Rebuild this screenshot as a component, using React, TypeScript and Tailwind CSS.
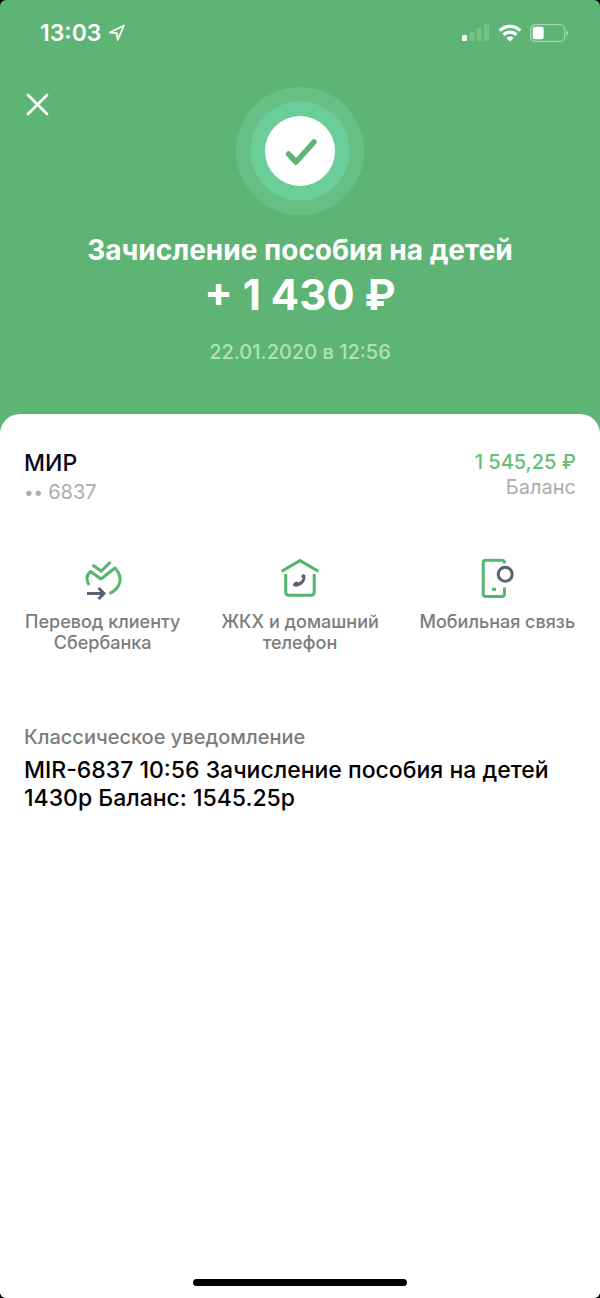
import React from 'react';

interface QuickActionProps {
  label: string;
  children: React.ReactNode;
}

function QuickAction({ label, children }: QuickActionProps) {
  return (
    <button type="button" className="flex flex-1 flex-col items-center gap-[13px] px-4">
      <svg viewBox="0 0 40 40" className="h-10 w-10 overflow-visible" fill="none" strokeWidth="3" aria-hidden="true">
        {children}
      </svg>
      <span className="text-center text-[18px] font-medium leading-[21px] text-[#7c7c7c]">{label}</span>
    </button>
  );
}

function StatusBar() {
  return (
    <div className="flex h-[66px] items-center justify-between pl-10 pr-8">
      <div className="flex items-center gap-[6px]">
        <span className="text-[23px] font-semibold leading-7">13:03</span>
        <svg viewBox="0 0 18 18" className="h-[18px] w-[18px]" fill="none" stroke="currentColor" strokeWidth="1.8" strokeLinejoin="round" aria-hidden="true">
          <path d="M16 1.5 2 8.5l6.8.7.8 6.8Z" />
        </svg>
      </div>
      <div className="flex items-center gap-2">
        <svg viewBox="0 0 28 18" className="h-[18px] w-7" fill="currentColor" aria-hidden="true">
          <rect x="0" y="11" width="5" height="6" rx="1.3" />
          <rect x="7.4" y="8" width="5" height="9" rx="1.3" opacity="0.16" />
          <rect x="14.6" y="4" width="5" height="13" rx="1.3" opacity="0.16" />
          <rect x="22" y="0" width="5" height="17" rx="1.3" opacity="0.16" />
        </svg>
        <svg viewBox="0 0 24 18" className="h-[18px] w-6" fill="none" stroke="currentColor" strokeWidth="3.2" aria-hidden="true">
          <path d="M1.7 6.6a14.6 14.6 0 0 1 20.6 0" />
          <path d="M5.6 10.8a9 9 0 0 1 12.8 0" />
          <path d="M12 17.6 8.4 14a5.1 5.1 0 0 1 7.2 0Z" fill="currentColor" stroke="none" />
        </svg>
        <svg viewBox="0 0 38 18" className="h-[18px] w-[38px]" fill="currentColor" aria-hidden="true">
          <rect x="0.7" y="0.7" width="34" height="16.6" rx="4.5" fill="none" stroke="currentColor" strokeWidth="1.2" opacity="0.45" />
          <rect x="2.7" y="2.7" width="11" height="12.6" rx="2.4" />
          <path d="M36.4 6.2c2.2 1 2.2 4.6 0 5.6Z" opacity="0.5" />
        </svg>
      </div>
    </div>
  );
}

export default function App() {
  return (
    <div className="bg-black font-['Inter','Liberation_Sans',sans-serif]">
      <div className="flex min-h-screen flex-col overflow-hidden rounded-md bg-[#5eb475]">
        <header className="relative pb-[50px] text-white">
          <StatusBar />
          <button type="button" aria-label="Закрыть" className="absolute left-6 top-[91px]">
            <svg viewBox="0 0 26 26" className="h-[26px] w-[26px]" fill="none" stroke="currentColor" strokeWidth="2.7" strokeLinecap="round">
              <path d="m4 4 19 19M23 4 4 23" />
            </svg>
          </button>

          <div className="flex flex-col items-center pt-5">
            <svg viewBox="0 0 130 130" className="h-[130px] w-[130px]" aria-hidden="true">
              <circle cx="65" cy="65" r="64" fill="#66c085" />
              <circle cx="65" cy="65" r="49.5" fill="#6bcd97" />
              <circle cx="65" cy="65" r="35" fill="#fff" />
              <path d="m53.5 68 7.5 8L79 56" fill="none" stroke="#5eb475" strokeWidth="5.5" strokeLinecap="round" strokeLinejoin="round" />
            </svg>
            <h1 className="mt-4 text-center text-[28px] font-bold leading-9">Зачисление пособия на детей</h1>
            <p className="text-[42px] font-bold leading-[54px]">+ 1 430 ₽</p>
            <p className="mt-[18px] text-[20px] font-medium leading-6 text-[#b0e2ba]">22.01.2020 в 12:56</p>
          </div>
        </header>

        <main className="flex flex-1 flex-col rounded-t-[20px] bg-white">
          <section className="flex justify-between px-6 pt-[34px]">
            <div>
              <h2 className="text-[23px] font-medium leading-[30px] text-[#090919]">МИР</h2>
              <p className="flex items-center gap-[5px] text-[20px] leading-7 text-[#acacac]">
                <span className="text-[17px]">••</span>
                6837
              </p>
            </div>
            <div className="pt-[2px] text-right text-[20px] leading-[25px]">
              <p className="font-medium text-[#66bd73]">1 545,25 ₽</p>
              <p className="text-[#acacac]">Баланс</p>
            </div>
          </section>

          <nav className="flex items-start px-1 pt-[52px]">
            <QuickAction label="Перевод клиенту Сбербанка">
              <path d="m9.5 7 8.7 6L27.5 4" stroke="#55b56e" />
              <path d="M6 27C3 22 3.5 17 7.5 13.5L18 21l14-11c9 9.5 5.5 20.5-5.5 25.5" stroke="#55b56e" strokeLinejoin="round" />
              <path d="M4 35.5h16M15.5 30l5.5 5.5-5.5 5.5" stroke="#5c6071" />
            </QuickAction>
            <QuickAction label="ЖКХ и домашний телефон">
              <path d="M1.7 13.3 20 2.6l18.3 10.7" stroke="#55b56e" />
              <path d="M5.7 16v18q0 3.2 3 3.2h22.5q3 0 3-3.2V16" stroke="#55b56e" />
              <path d="M13.2 25.8c-.6.7-.3 2 .8 2.5 5.8 2 13-4.8 11.2-11-.4-1.2-2-1.5-2.7-.7l-.8 1c-.5.7-.3 1.7.3 2.2l.7.5c-.7 2-2.3 3.5-4.3 4.3l-.6-.6c-.6-.7-1.5-.8-2.2-.2Z" fill="#5c6071" />
            </QuickAction>
            <QuickAction label="Мобильная связь">
              <path d="M27.5 5.5V5q0-2.700-3-2.700H9.2q-3 0-3 2.700v30.500q0 3 3 3h15.300q3 0 3-3V29.500" stroke="#55b56e" />
              <circle cx="28.2" cy="16.3" r="7" stroke="#5c6071" />
              <path d="M15 31.3h4" stroke="#55b56e" />
            </QuickAction>
          </nav>

          <section className="px-6 pt-[70px]">
            <h3 className="text-[20px] font-medium leading-7 text-[#7c7c7c]">Классическое уведомление</h3>
            <p className="mt-[5px] text-[23px] font-medium leading-7 text-black">
              MIR-6837 10:56 Зачисление пособия на детей 1430р Баланс: 1545.25р
            </p>
          </section>

          <div className="mx-auto mb-3 mt-auto h-[7px] w-[214px] rounded-full bg-black" />
        </main>
      </div>
    </div>
  );
}
